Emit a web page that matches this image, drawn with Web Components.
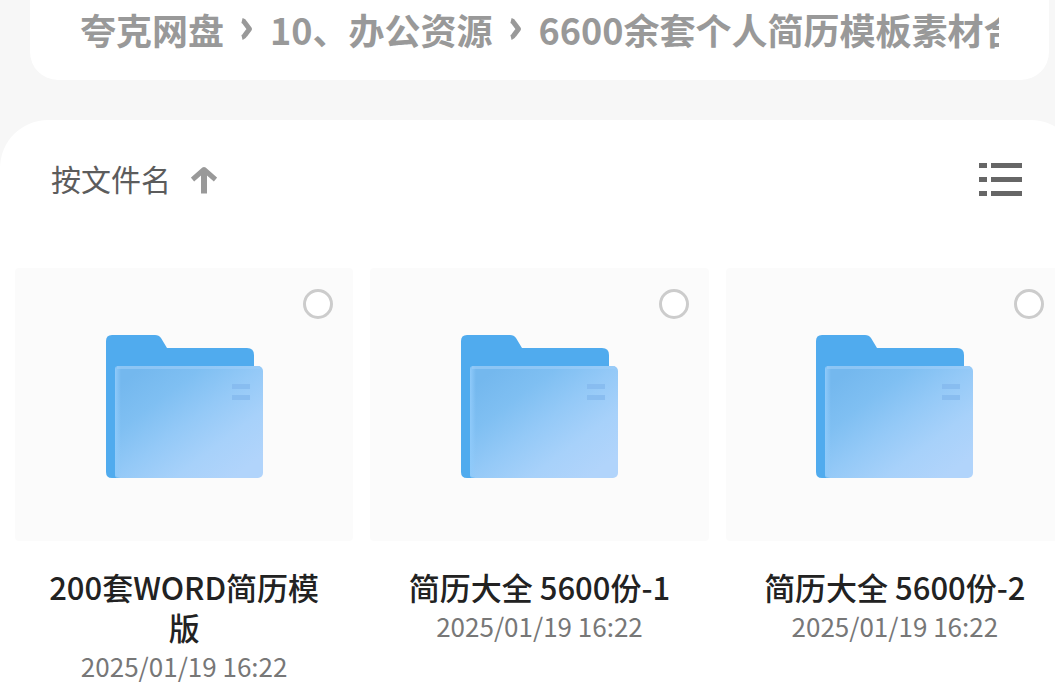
<!DOCTYPE html>
<html lang="zh-CN">
<head>
<meta charset="utf-8">
<meta name="viewport" content="width=device-width, initial-scale=1">
<title>夸克网盘</title>
<style>
	html {
		overflow-x: hidden;
	}
	body {
		display: flex;
		flex-direction: column;
		margin: 0;
		overflow-x: hidden;
		min-height: 100vh;
		background: #f7f7f7;
		color: #222;
		font-family: "Noto Sans CJK SC", sans-serif;
	}
</style>
</head>
<body>
	<path-bar>
		<path-item>夸克网盘</path-item>
		<path-item>10、办公资源</path-item>
		<path-item>6600余套个人简历模板素材合集</path-item>
	</path-bar>

	<file-panel>
		<sort-button slot="tools">按文件名</sort-button>
		<view-button slot="tools"></view-button>
		<folder-card name="200套WORD简历模版" date="2025/01/19 16:22"></folder-card>
		<folder-card name="简历大全 5600份-1" date="2025/01/19 16:22"></folder-card>
		<folder-card name="简历大全 5600份-2" date="2025/01/19 16:22"></folder-card>
	</file-panel>

<script>
(function(){

	function createTemplate(html) {
		const tmpl = document.createElement("template");
		tmpl.innerHTML = html;
		return tmpl;
	}

	class BaseElement extends HTMLElement {
		constructor() {
			super();
			const shadowRoot = this.attachShadow({mode: "open"});
			shadowRoot.appendChild(this.constructor.tmpl.content.cloneNode(true));
		}
	}

	class PathBar extends BaseElement {}
	PathBar.tmpl = createTemplate(`
		<style>
			:host {
				display: block;
				margin: 0 6px 0 30px;
				padding: 7px 50px 29px;
				border-radius: 0 0 28px 28px;
				background: #fff;
			}
			nav {
				display: flex;
				overflow: hidden;
			}
		</style>
		<nav aria-label="路径"><slot></slot></nav>
	`);
	customElements.define("path-bar", PathBar);

	class PathItem extends BaseElement {}
	PathItem.tmpl = createTemplate(`
		<style>
			:host {
				display: flex;
				flex: none;
				align-items: center;
			}
			a {
				color: #999;
				font-size: 36px;
				font-weight: 700;
				line-height: 44px;
				text-decoration: none;
				white-space: nowrap;
			}
			svg {
				display: block;
				margin: 0 17px;
			}
			:host(:last-child) svg {
				display: none;
			}
		</style>
		<a href="#"><slot></slot></a>
		<svg width="12" height="22" viewBox="0 0 12 22" fill="none" stroke="#999" stroke-width="5" aria-hidden="true">
			<path d="M1 2.500Q3 3 4 5L8.500 11L4 17Q3 19 1 19.500" stroke-linejoin="round"/>
		</svg>
	`);
	customElements.define("path-item", PathItem);

	// The panel is a bit wider than the window, its right edge is cut off
	class FilePanel extends BaseElement {}
	FilePanel.tmpl = createTemplate(`
		<style>
			:host {
				display: block;
				flex: 1;
				margin: 40px -24px 0 0;
				padding: 36px 15px 0;
				border-radius: 48px 48px 0 0;
				background: #fff;
			}
			.tools {
				display: flex;
				align-items: center;
				justify-content: space-between;
				padding: 0 42px 0 36px;
			}
			.files {
				display: grid;
				grid-template-columns: repeat(3, 1fr);
				align-items: start;
				gap: 17px;
				margin-top: 64px;
			}
		</style>
		<div class="tools"><slot name="tools"></slot></div>
		<div class="files"><slot></slot></div>
	`);
	customElements.define("file-panel", FilePanel);

	class SortButton extends BaseElement {}
	SortButton.tmpl = createTemplate(`
		<style>
			:host {
				display: block;
			}
			button {
				display: flex;
				align-items: center;
				gap: 20px;
				padding: 0;
				border: 0;
				background: none;
				color: #5c5c5c;
				font: inherit;
				font-size: 30px;
				line-height: 44px;
			}
			span {
				padding-bottom: 4px;
			}
		</style>
		<button type="button">
			<span><slot></slot></span>
			<svg width="26" height="28" viewBox="0 0 26 28" fill="none" stroke="#999" aria-hidden="true">
				<path d="M13 27.500V4" stroke-width="6"/>
				<path d="M1.500 13.500L13 3.500L24.500 13.500" stroke-width="5" stroke-linejoin="round"/>
			</svg>
		</button>
	`);
	customElements.define("sort-button", SortButton);

	class ViewButton extends BaseElement {}
	ViewButton.tmpl = createTemplate(`
		<style>
			:host {
				display: block;
			}
			button {
				display: block;
				padding: 0;
				border: 0;
				background: none;
			}
			svg {
				display: block;
			}
		</style>
		<button type="button" aria-label="列表">
			<svg width="43" height="34" viewBox="0 0 43 34" fill="#666" aria-hidden="true">
				<path d="M0 0h8v5H0zM12 0h31v5H12zM0 14h8v5H0zM12 14h31v5H12zM0 28h8v5H0zM12 28h31v5H12z"/>
			</svg>
		</button>
	`);
	customElements.define("view-button", ViewButton);

	class FolderCard extends BaseElement {
		connectedCallback() {
			const name = this.getAttribute("name");
			this.shadowRoot.querySelector(".name").textContent = name;
			this.shadowRoot.querySelector(".date").textContent = this.getAttribute("date");
			this.shadowRoot.querySelector("input").setAttribute("aria-label", name);
		}
	}
	FolderCard.tmpl = createTemplate(`
		<style>
			:host {
				display: block;
				min-width: 0;
				text-align: center;
			}
			.tile {
				display: flex;
				flex-direction: column;
				align-items: center;
				gap: 16px;
				padding: 21px 20px 62px;
				border-radius: 4px;
				background: #fbfbfb;
			}
			input {
				appearance: none;
				align-self: flex-end;
				box-sizing: border-box;
				width: 30px;
				height: 30px;
				margin: 0;
				border: 3px solid #ccc;
				border-radius: 50%;
				background: #fff;
			}
			input:checked {
				border-color: #4facee;
				background: #4facee;
			}
			svg {
				display: block;
			}
			.info {
				padding: 26px 24px 0;
			}
			.name {
				display: block;
				color: #222;
				font-size: 31px;
				font-weight: 500;
				line-height: 40px;
				text-decoration: none;
			}
			.date {
				display: block;
				color: #777;
				font-size: 26px;
				line-height: 38px;
			}
		</style>
		<div class="tile">
			<input type="checkbox">
			<svg width="157" height="144" viewBox="0 0 157 144" aria-hidden="true">
				<defs>
					<linearGradient id="front" x1="0.1" y1="0.1" x2="0.9" y2="0.9">
						<stop offset="0" stop-color="#74b8ee"/>
						<stop offset="0.25" stop-color="#7fbff2"/>
						<stop offset="0.5" stop-color="#94c9f7"/>
						<stop offset="0.75" stop-color="#a7d1fa"/>
						<stop offset="1" stop-color="#b1d4fb"/>
					</linearGradient>
					<linearGradient id="edge" x1="0" y1="0" x2="1" y2="0">
						<stop offset="0" stop-color="#8fcafa"/>
						<stop offset="1" stop-color="#8fcafa" stop-opacity="0"/>
					</linearGradient>
				</defs>
				<path fill="#50abee" d="M0 6Q0 0 6 0H49Q53 0 55 3L61 13H141Q148 13 148 20V60L20 143H6Q0 143 0 137Z"/>
				<rect x="9" y="31" width="148" height="112" rx="5" fill="url(#front)"/>
				<rect x="9" y="31" width="6" height="112" rx="3" fill="url(#edge)"/>
				<rect x="11" y="31" width="143" height="3" fill="#9ccdf8" opacity="0.6"/>
				<path fill="#85b9ee" opacity="0.8" d="M126 49h18v5h-18zM126 60h18v5h-18z"/>
			</svg>
		</div>
		<div class="info">
			<a class="name" href="#"></a>
			<time class="date"></time>
		</div>
	`);
	customElements.define("folder-card", FolderCard);
}())
</script>
</body>
</html>
